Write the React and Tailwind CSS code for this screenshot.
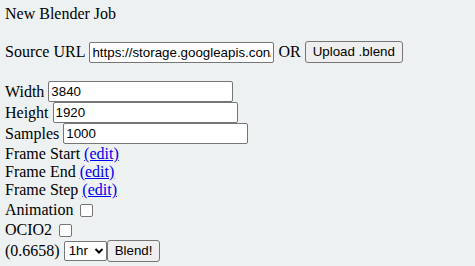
import React from "react";

const inputCls =
  "inline-block w-[185px] h-[21px] px-[2px] py-[1px] border border-[#767676] rounded-[2px] bg-white text-[13.33px] text-black align-baseline";
const fieldFont = { fontFamily: "'Liberation Sans', Arial, sans-serif" };

function Field({ label, value }) {
  return (
    <div className="h-[21px] flex items-center">
      <span>{label}&nbsp;</span>
      <input
        type="text"
        defaultValue={value}
        className={inputCls}
        style={fieldFont}
      />
    </div>
  );
}

function EditRow({ label, first }) {
  return (
    <div className={first ? "mt-[1px] h-[18px] leading-[18px]" : "h-[18px] leading-[18px]"}>
      {label}{" "}
      <a href="#" className="text-[#0000ee] underline">
        (edit)
      </a>
    </div>
  );
}

function CheckRow({ label, first }) {
  return (
    <div className={first ? "mt-[1px] h-[20px] flex items-center" : "h-[20px] flex items-center"}>
      <span>{label}&nbsp;</span>
      <input
        type="checkbox"
        className="appearance-none w-[13px] h-[13px] ml-[3px] border border-[#767676] rounded-[2px] bg-white"
      />
    </div>
  );
}

export default function App() {
  return (
    <div
      className="w-[475px] h-[266px] bg-[#eef1f2] text-[16px] text-black px-[5px] pt-[5px] overflow-hidden"
      style={{ fontFamily: "'Liberation Serif', 'Times New Roman', serif" }}
    >
      <div className="h-[18px] leading-[18px]">New Blender Job</div>

      <div className="mt-[18px] h-[22px] flex items-center">
        <span>Source URL&nbsp;</span>
        <input
          type="text"
          defaultValue="https://storage.googleapis.con/blender/scene.blend"
          className={inputCls}
          style={fieldFont}
        />
        <span>&nbsp;OR&nbsp;</span>
        <button
          className="h-[22px] px-[7px] border border-[#767676] rounded-[3px] bg-[#efefef] text-[13.33px] text-black"
          style={fieldFont}
        >
          Upload .blend
        </button>
      </div>

      <div className="mt-[18px]">
        <Field label="Width" value="3840" />
        <Field label="Height" value="1920" />
        <Field label="Samples" value="1000" />
        <EditRow label="Frame Start" first />
        <EditRow label="Frame End" />
        <EditRow label="Frame Step" />
        <CheckRow label="Animation" first />
        <CheckRow label="OCIO2" />
        <div className="h-[22px] flex items-center">
          <span>(0.6658)&nbsp;</span>
          <div
            className="h-[20px] w-[43px] flex items-center justify-between pl-[4px] pr-[2px] border border-[#767676] rounded-[2px] bg-white text-[13.33px]"
            style={fieldFont}
          >
            <span>1hr</span>
            <svg width="10" height="10" viewBox="0 0 10 10">
              <path d="M1.5 3 L5 6.5 L8.5 3" stroke="#000" strokeWidth="2" fill="none" />
            </svg>
          </div>
          <button
            className="h-[22px] px-[7px] border border-[#767676] rounded-[3px] bg-[#efefef] text-[13.33px] text-black"
            style={fieldFont}
          >
            Blend!
          </button>
        </div>
      </div>
    </div>
  );
}
